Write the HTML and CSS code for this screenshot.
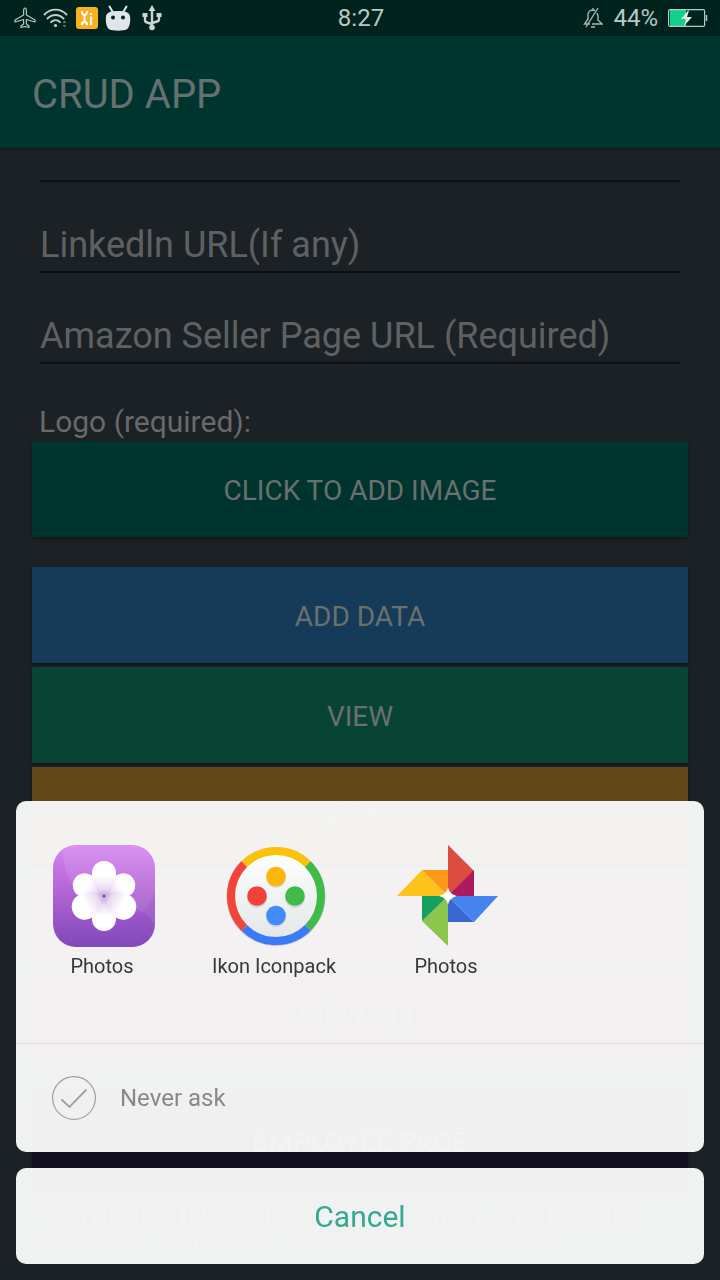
FILE: index.html
```html
<!DOCTYPE html>
<html lang="en">
<head>
<meta charset="utf-8">
<meta name="viewport" content="width=device-width, initial-scale=1">
<title>CRUD APP</title>
<link rel="stylesheet" href="styles.css">
</head>
<body>
<div class="screen">
  <div class="statusbar">
    <div class="status-group status-left">
      <svg width="22" height="22" viewBox="0 0 22 22" fill="none" stroke="#b9c4c1" stroke-width="1.2" stroke-linejoin="round"><path d="M11 1c-1 0-1.400 1.400-1.400 3v4L1 13v2l8.600-2.500v4.500L7 19v1.400l4-.9 4 .9V19l-2.600-2v-4.500L21 15v-2l-8.600-5V4c0-1.600-.4-3-1.400-3z"/></svg>
      <svg width="26" height="22" viewBox="0 0 26 22" fill="none" stroke="#c3cfcc" stroke-width="1.900" stroke-linecap="round"><path d="M1.500 7.500C7.500 1 17.500 1 23.500 7.500M4.500 11.500c4.500-4.700 11.500-4.700 16 0M8 15.200c2.700-2.700 6.300-2.700 9 0"/><circle cx="12.500" cy="18.500" r="1.600" fill="#c3cfcc" stroke="none"/><path d="M19.500 16l2-2.500 2 2.500zM19.500 18l2 2.500 2-2.500z" fill="#5f7770" stroke="none"/></svg>
      <svg width="22" height="22" viewBox="0 0 22 22"><rect width="22" height="22" rx="3" fill="#fbb01f"/><g fill="none" stroke="#fff" stroke-width="2"><path d="M6 4v2l2.500 3L11 6V4M8.500 8v7M6 18v-1.500L8.500 14l2.500 2.500V18"/><path d="M15 9.500V18" stroke-width="2.200"/></g><circle cx="15" cy="7" r="1.100" fill="#fff"/></svg>
      <svg width="26" height="26" viewBox="0 0 26 26"><path d="M4.500 1.500l3 5M21.500 1.500l-3 5" stroke="#dfe6ea" stroke-width="2" stroke-linecap="round"/><path d="M1 11c1-4 5-5 12-5s11 1 12 5c.6 6-.2 11-3.500 13.500-3 1.500-14 1.500-17 0C1.200 22 .4 17 1 11z" fill="#dfe6ea"/><circle cx="8" cy="12.500" r="2" fill="#00231e"/><circle cx="18" cy="12.500" r="2" fill="#00231e"/></svg>
      <svg class="usb" width="20" height="26" viewBox="0 0 20 26" fill="none" stroke="#cbd5d3" stroke-width="2.400"><path d="M10 5v16M3 10v5q0 2 2 2.500l5 1.500M17 10v4q0 2-2 2.500l-5 1.500"/><path d="M10 0l3.500 6h-7zM0.500 8h5v4h-5zM14.500 8h5v4h-5z" fill="#cbd5d3" stroke="none"/><circle cx="10" cy="22.500" r="2.800" fill="#cbd5d3" stroke="none"/></svg>
    </div>
    <span class="clock">8:27</span>
    <div class="status-group status-right">
      <svg width="20" height="22" viewBox="0 0 20 22" fill="none" stroke="#aab7b4" stroke-width="1.400"><path d="M7 17H1.500L5 12V8c0-3 2-5 4.500-5L12 3.500M14 6l1 3v4l4 4H9M8 20h4M3 20L15 1M10 1v2"/></svg>
      <span class="percent">44%</span>
      <svg width="40" height="20" viewBox="0 0 40 20"><rect x="2" y="2" width="16" height="16" fill="#10d18c"/><rect x=".6" y="1.600" width="36" height="16.800" rx="1.500" fill="none" stroke="#bcc8c5" stroke-width="1.200"/><path d="M38.500 7v6" stroke="#bcc8c5" stroke-width="1.500"/><path d="M20 2.500L13 11h5l-2 7 8-9h-5l2-6.500z" fill="#e4eae8"/></svg>
    </div>
  </div>
  <header class="appbar"><h1 class="title">CRUD APP</h1></header>
  <main class="form">
    <input class="field field-cut" type="text" aria-label="Page URL">
    <input class="field" type="url" aria-label="LinkedIn URL" placeholder="Linkedln URL(If any)">
    <input class="field" type="url" aria-label="Amazon Seller Page URL" placeholder="Amazon Seller Page URL (Required)">
    <label class="logo-label" for="logo">Logo (required):</label>
    <button class="btn btn-image" id="logo" type="button">CLICK TO ADD IMAGE</button>
    <div class="actions">
      <button class="btn btn-add" type="button">ADD DATA</button>
      <button class="btn btn-view" type="button">VIEW</button>
      <button class="btn btn-update" type="button">UPDATE</button>
      <button class="btn btn-delete" type="button">DELETE</button>
      <button class="btn btn-all" type="button">VIEW ALL</button>
    </div>
    <button class="btn btn-employee" type="button">EMPLOYEE PAGE</button>
    <p class="note">*Company ID is Auto Incremented and is only used for updation, viewing and deletion</p>
  </main>
</div>

<div class="chooser" role="dialog" aria-label="Choose an app">
  <section class="sheet">
    <div class="apps">
      <button class="app" type="button">
        <svg class="app-icon" viewBox="0 0 102 102">
          <defs>
            <linearGradient id="violet" x1="0" y1="0" x2="0" y2="1"><stop offset="0" stop-color="#d785f0"/><stop offset=".5" stop-color="#ae62d3"/><stop offset="1" stop-color="#7f48b9"/></linearGradient>
            <linearGradient id="petal" x1="0" y1="0" x2="0" y2="1"><stop offset="0" stop-color="#fff"/><stop offset=".45" stop-color="#fefcff"/><stop offset=".8" stop-color="#eadcf2"/><stop offset="1" stop-color="#c9a2dc"/></linearGradient>
            <clipPath id="tile"><rect width="102" height="102" rx="23"/></clipPath>
          </defs>
          <g clip-path="url(#tile)"><rect width="102" height="102" fill="url(#violet)"/><path d="M10 0C8 32 24 55 59 60s46 9 43 42V0z" fill="#fff" opacity=".1"/><path d="M0 80c32-4 64 4 72 22h30V48C89 82 56 87 0 80z" fill="#8d4fc5" opacity=".25"/></g>
          <g fill="url(#petal)">
            <path d="M51 51C43 47 39 38 39 28a12 12 0 0 1 24 0c0 10-4 19-12 23z" transform="rotate(180 51 51)"/>
            <path d="M51 51C43 47 39 38 39 29a12 12 0 0 1 24 0c0 9-4 18-12 22z" transform="rotate(-61 51 51)"/>
            <path d="M51 51C43 47 39 38 39 29a12 12 0 0 1 24 0c0 9-4 18-12 22z" transform="rotate(61 51 51)"/>
            <path d="M51 51C42 47 38 38 38 29a13 13 0 0 1 26 0c0 9-4 18-13 22z" transform="rotate(-119 51 51)"/>
            <path d="M51 51C42 47 38 38 38 29a13 13 0 0 1 26 0c0 9-4 18-13 22z" transform="rotate(119 51 51)"/>
            <path d="M51 51C43 47 39 38 39 28a12 12 0 0 1 24 0c0 10-4 19-12 23z"/>
          </g>
          <circle cx="51" cy="51" r="1.500" fill="#7b3fa5"/>
        </svg>
        <span class="app-name">Photos</span>
      </button>
      <button class="app" type="button">
        <svg class="app-icon" viewBox="0 0 102 102">
          <defs><linearGradient id="disc" x1="0" y1="0" x2="0" y2="1"><stop offset="0" stop-color="#fff"/><stop offset="1" stop-color="#e3e5e7"/></linearGradient></defs>
          <circle cx="51" cy="51.500" r="49.500" fill="#777" opacity=".35"/>
          <circle cx="51" cy="51" r="45" fill="url(#disc)"/>
          <g fill="none" stroke-width="8"><path d="M19.200 19.200a45 45 0 0 1 63.600 0" stroke="#fcc20a"/><path d="M82.800 19.200a45 45 0 0 1 0 63.600" stroke="#3ebc4b"/><path d="M82.800 82.800a45 45 0 0 1-63.600 0" stroke="#3b7af5"/><path d="M19.200 82.800a45 45 0 0 1 0-63.600" stroke="#f24438"/></g>
          <g fill="#888" opacity=".25"><circle cx="51" cy="33" r="10"/><circle cx="32" cy="53" r="10"/><circle cx="70" cy="53" r="10"/><circle cx="51" cy="72" r="10"/></g>
          <circle cx="51" cy="31.500" r="9.800" fill="#fdb60a"/><circle cx="32" cy="51" r="9.800" fill="#f1423a"/><circle cx="70" cy="51" r="9.800" fill="#3ebc4b"/><circle cx="51" cy="70.500" r="9.800" fill="#438afa"/>
        </svg>
        <span class="app-name">Ikon Iconpack</span>
      </button>
      <button class="app" type="button">
        <svg class="app-icon" viewBox="0 0 102 102">
          <path d="M51 0l26 26-26 26z" fill="#dc4c41"/><path d="M77 25v26H51z" fill="#ae1a5c"/>
          <path d="M51 51h50L77 77z" fill="#4583ef"/><path d="M51 51l26 26H51z" fill="#3968d3"/>
          <path d="M51 51v50L25 76z" fill="#8cc54b"/><path d="M51 51H25v25z" fill="#14a05d"/>
          <path d="M51 51H0l25-26z" fill="#fdc31c"/><path d="M51 51V25H25z" fill="#fd981a"/>
          <path d="M51 42q1 7 9 9-8 2-9 9-1-7-9-9 8-2 9-9z" fill="#fff"/>
        </svg>
        <span class="app-name">Photos</span>
      </button>
    </div>
    <label class="never"><input class="check" type="checkbox"><svg class="check-mark" viewBox="0 0 44 44" fill="none" stroke="#a0a0a0"><circle cx="22" cy="22" r="21.400" stroke-width="1.200"/><path d="M9.500 23.500l8 7.500L34.500 13.500" stroke-width="1.800"/></svg><span>Never ask</span></label>
  </section>
  <button class="cancel" type="button">Cancel</button>
</div>
</body>
</html>
```
FILE: styles.css
```css
* { box-sizing: border-box; }
body { margin: 0; background: #1c2125; font-family: Roboto, "Noto Sans", sans-serif; }
button, input { font-family: inherit; border: 0; margin: 0; }
h1, p { margin: 0; font-weight: 400; }
svg { display: block; flex: none; }

.screen { display: flex; flex-direction: column; height: 100vh; overflow: hidden; }
.statusbar {
  display: grid; grid-template-columns: 1fr auto 1fr; align-items: center;
  height: 36px; flex: none; padding: 0 12px 0 14px; background: #00231e; color: #bcc8c5; font-size: 24px; line-height: 36px;
}
.status-group { display: flex; align-items: center; }
.status-left { gap: 7px; }
.usb { margin-left: 4px; }
.status-right { justify-content: flex-end; gap: 10px; }
.appbar {
  flex: none; padding: 35px 32px 29px; background: #00352f; position: relative;
  box-shadow: 0 1px 4px rgba(0, 0, 0, .35);
}
.title { font-size: 40px; line-height: 48px; color: #66716f; }

.form { display: flex; flex-direction: column; flex: 1; min-height: 0; overflow: hidden; margin-bottom: 32px; padding: 0 32px; }
.form > * { flex: none; }
.field {
  height: 91px; margin: 0 8px; padding: 36px 0 0; border-bottom: 2px solid #0c1013; border-radius: 0;
  background: transparent; color: #666; font-size: 36px; line-height: 42px; outline: 0;
}
.field::placeholder { color: #5e6163; opacity: 1; }
.field-cut { height: 34px; padding: 0; }
.logo-label { margin-top: 38px; padding: 0 7px; font-size: 30px; line-height: 39px; color: #67696a; }
.btn { height: 96px; padding: 2px 0 0; font-size: 28px; color: #69706e; box-shadow: 0 2px 3px rgba(0, 0, 0, .35); }
.btn-image { background: #00352f; }
.actions { display: flex; flex-direction: column; gap: 4px; margin: 30px 0; }
.btn-add { background: #163b58; }
.btn-view { background: #074434; }
.btn-update { background: #624817; color: #77694d; }
.btn-delete { background: #5c2020; }
.btn-all { background: #5a1c34; }
.btn-employee { background: #120f1f; color: #5a5a60; }
.note { margin-top: 8px; font-size: 30px; line-height: 36px; color: #5a5c5e; }

.chooser { position: fixed; left: 16px; right: 16px; bottom: 16px; display: flex; flex-direction: column; gap: 16px; }
.sheet, .cancel { border-radius: 10px; background: rgba(248, 248, 248, .97); }
.apps { display: grid; grid-template-columns: repeat(4, 1fr); height: 243px; padding: 44px 0 0; border-bottom: 1px solid #dcdcdc; }
.app { display: flex; flex-direction: column; align-items: center; gap: 6px; padding: 0; background: transparent; color: #383838; }
.app-icon { width: 102px; height: 102px; margin-left: 4px; }
.app-name { font-size: 20px; line-height: 26px; }
.never { display: flex; align-items: center; gap: 24px; height: 108px; padding: 0 36px; font-size: 24px; color: #888; position: relative; }
.check { position: absolute; width: 44px; height: 44px; opacity: 0; }
.check-mark { width: 44px; height: 44px; }
.cancel { height: 96px; padding: 0; font-size: 30px; color: #35a893; }
```
